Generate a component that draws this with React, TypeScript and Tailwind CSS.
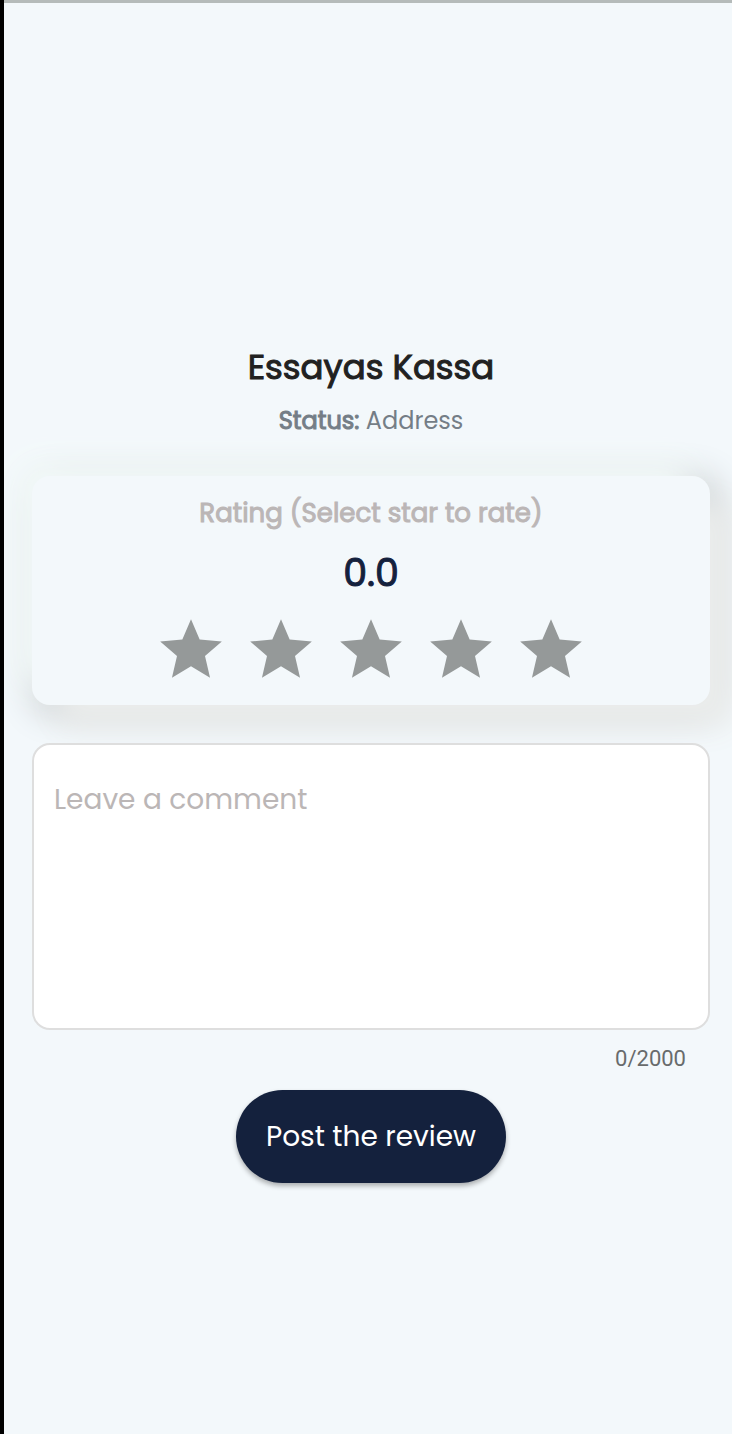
import { useState } from "react";

const STARS = [1, 2, 3, 4, 5];
const MAX_LENGTH = 2000;

function Star() {
  return (
    <svg viewBox="0 0 24 24" className="size-full" fill="currentColor" aria-hidden="true">
      <path d="M12 17.27L18.18 21l-1.64-7.03L22 9.24l-7.19-.61L12 2 9.19 8.63 2 9.24l5.46 4.73L5.82 21z" />
    </svg>
  );
}

export default function App() {
  const [rating, setRating] = useState(0);
  const [comment, setComment] = useState("");

  return (
    <div className="min-h-screen overflow-x-hidden border-l-4 border-black bg-[#f3f8fb] font-['Poppins',sans-serif]">
      <main className="flex flex-col items-center border-t-3 border-[#b5bbba] pt-[340px] pr-[22px] pb-16 pl-7">
        <h1 className="text-[34px] leading-12 text-[#212121] [-webkit-text-stroke:1px_currentColor]">Essayas Kassa</h1>
        <p className="mt-2 text-2xl leading-11 text-[#747d86]">
          <span className="[-webkit-text-stroke:1px_currentColor]">Status:</span> Address
        </p>

        <section className="mt-[33px] flex w-full flex-col items-center rounded-[18px] bg-[#f3f8fb] pt-[15px] pb-[18px] shadow-[24px_24px_30px_#ebedec,-16px_-16px_34px_#f4fbfa,4px_4px_36px_#b2b6b9]">
          <h2 className="text-[26px] leading-11 text-[#bbb6b6] [-webkit-text-stroke:1px_currentColor]">
            Rating (Select star to rate)
          </h2>
          <output className="mt-[14px] text-[38px] leading-12 text-[#14213d] [-webkit-text-stroke:1px_currentColor]">
            {rating.toFixed(1)}
          </output>
          <div className="mt-4 flex gap-4">
            {STARS.map((value) => (
              <button
                key={value}
                type="button"
                aria-label={`Rate ${value} of 5`}
                onClick={() => setRating(value)}
                className={value <= rating ? "size-[74px] text-[#fca311]" : "size-[74px] text-[#959999]"}
              >
                <Star />
              </button>
            ))}
          </div>
        </section>

        <textarea
          aria-label="Leave a comment"
          placeholder="Leave a comment"
          maxLength={MAX_LENGTH}
          rows={5}
          value={comment}
          onChange={(event) => setComment(event.target.value)}
          className="mt-[38px] block w-full resize-none rounded-[18px] border-2 border-[#dedede] bg-white px-5 pt-[33px] pb-[30px] text-[28px] leading-11 text-[#212121] outline-none placeholder:text-[#bbb6b6]"
        />
        <p className="mt-[13px] mr-6 self-end font-[Roboto,sans-serif] text-[22px] leading-8 text-[#686b6c]">
          {comment.length}/{MAX_LENGTH}
        </p>

        <button
          type="button"
          className="mt-[15px] rounded-full bg-[#14213d] px-[30px] py-6 text-[28px] leading-[45px] text-white shadow-[0_3px_5px_rgba(0,0,0,0.3)]"
        >
          Post the review
        </button>
      </main>
    </div>
  );
}
